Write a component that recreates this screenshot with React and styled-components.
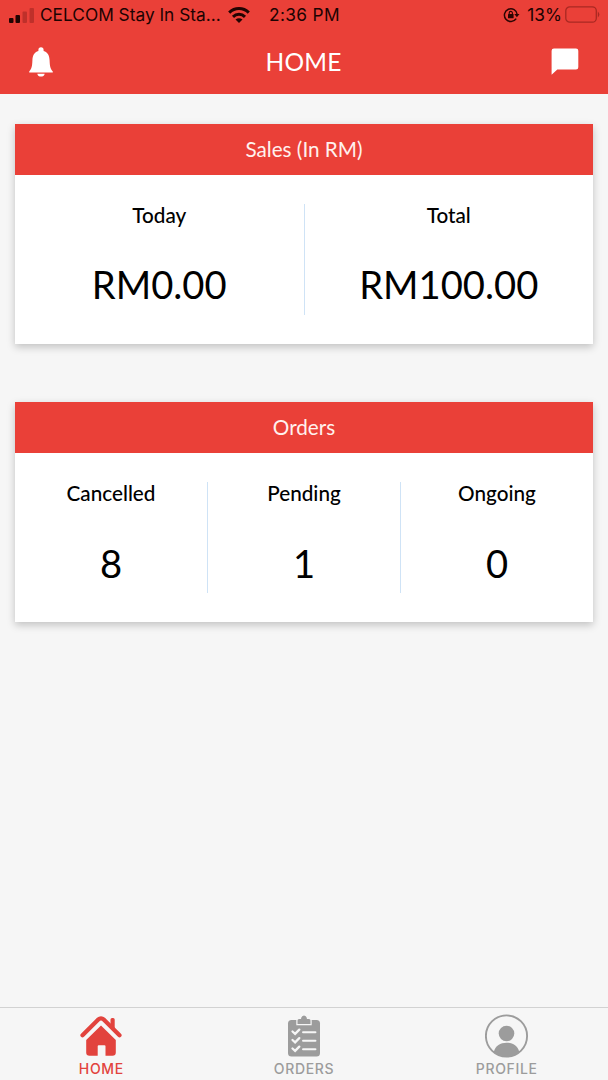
import React from 'react';
import styled, { createGlobalStyle } from 'styled-components';

const GlobalStyle = createGlobalStyle`
    * {
        box-sizing: border-box;
    }

    body {
        margin: 0;
        background: #f6f6f6;
    }
`;

const Container = styled.div`
    height: 100vh;
    display: flex;
    flex-direction: column;
    background: #f6f6f6;
    font-family: 'Lato', sans-serif;
    color: #000;
    overflow: hidden;
`;

const Header = styled.header`
    height: 94px;
    background: #ea4038;
`;

const StatusBar = styled.div`
    height: 29px;
    padding: 0 8px 0 9px;
    display: grid;
    grid-template-columns: 1fr auto 1fr;
    align-items: center;
    font-family: 'Inter', sans-serif;
    font-size: 17.3px;
    color: #1c0302;
    white-space: nowrap;
`;

const StatusGroup = styled.div`
    display: flex;
    align-items: center;
    justify-content: ${props => props.$end ? 'flex-end' : 'flex-start'};
`;

const StatusText = styled.span`
    letter-spacing: ${props => props.$spacing || '0'};
    margin-left: ${props => props.$left || '0'};
`;

const StatusIcon = styled.svg`
    flex: none;
    margin-left: ${props => props.$left || '0'};
`;

const TitleBar = styled.div`
    height: 65px;
    padding: 1px 29px 0 28px;
    display: flex;
    align-items: center;
    justify-content: space-between;
`;

const Title = styled.h1`
    margin: 0 0 0 2px;
    font-size: 24.5px;
    font-weight: 400;
    line-height: 30px;
    letter-spacing: 0.2px;
    color: #fff;
`;

const Content = styled.main`
    flex: 1;
    padding: 29.5px 15px 0;
    display: flex;
    flex-direction: column;
    gap: 59px;
`;

const Card = styled.section`
    height: 220px;
    display: flex;
    flex-direction: column;
    background: #fff;
    box-shadow: 0 3px 8px rgba(0, 0, 0, 0.22);

    & + & {
        margin-top: -0.4px;
    }
`;

const CardTitle = styled.h2`
    height: 51.3px;
    margin: 0;
    background: #ea4038;
    color: #fff1ee;
    font-size: 20.7px;
    font-weight: 400;
    line-height: 51px;
    text-align: center;
`;

const Stats = styled.div`
    flex: 1;
    display: flex;
    padding: 29px 0;
`;

const Stat = styled.div`
    flex: 1;
    text-align: center;

    &:not(:last-child) {
        border-right: 1px solid #cfe3f6;
    }
`;

const StatLabel = styled.div`
    font-size: 20.7px;
    font-weight: 500;
    line-height: 22px;
`;

const StatValue = styled.div`
    margin-top: 34.5px;
    font-size: 38.2px;
    line-height: 48px;
`;

const TabBar = styled.nav`
    height: 73px;
    display: flex;
    border-top: 1px solid #d2d2d2;
    background: #f6f6f6;
`;

const Tab = styled.div`
    flex: 1;
    display: flex;
    flex-direction: column;
    align-items: center;
    padding-top: 5px;
    color: ${props => props.$active ? '#e2433d' : '#9c9c9c'};
`;

const TabIcon = styled.div`
    height: 45px;
    display: flex;
    align-items: center;
`;

const TabLabel = styled.span`
    margin-top: 2px;
    font-family: 'Inter', sans-serif;
    font-size: 14px;
    font-weight: 500;
    line-height: 18px;
    letter-spacing: 0.65px;
`;

const SignalIcon = () => (
  <StatusIcon width="25" height="16" viewBox="0 0 25 16">
    <rect x="0" y="11" width="4.5" height="5" rx="1" fill="#210402" />
    <rect x="6.5" y="8" width="4.5" height="8" rx="1" fill="#210402" />
    <rect x="13.5" y="4.5" width="4.5" height="11.5" rx="1" fill="#bf302a" />
    <rect x="20.5" y="1" width="4.5" height="15" rx="1" fill="#bf302a" />
  </StatusIcon>
);

const WifiIcon = () => (
  <StatusIcon $left="7px" width="22" height="16" viewBox="0 0 22 16" fill="none" stroke="#210402" strokeWidth="3">
    <path d="M1.2 5.6C6.8.2 15.2.2 20.8 5.6" />
    <path d="M5 9.8c3.4-3.3 8.6-3.3 12 0" />
    <path d="M11 15.9 7.5 12.6q3.5-2.8 7 0z" fill="#210402" stroke="none" />
  </StatusIcon>
);

const RotationLockIcon = () => (
  <StatusIcon width="17" height="16" viewBox="0 0 17 16" fill="none" stroke="#2a0503" strokeWidth="1.5">
    <path d="M13.2 11.6A6.4 6.4 0 1 1 14.2 7.5" />
    <path d="M11.3 7h5.2l-2.6 3.2z" fill="#2a0503" stroke="none" />
    <rect x="5" y="7" width="5.6" height="4.3" rx=".6" fill="#2a0503" stroke="none" />
    <path d="M6.2 7.2V6a1.6 1.6 0 0 1 3.2 0v1.2" strokeWidth="1.1" />
  </StatusIcon>
);

const BatteryIcon = () => (
  <StatusIcon $left="3px" width="35" height="17" viewBox="0 0 35 17">
    <rect x=".8" y=".8" width="30.5" height="15.4" rx="4" fill="none" stroke="#a92822" strokeWidth="1.3" />
    <path d="M32.8 5.5q3.2 3 0 6z" fill="#a92822" />
  </StatusIcon>
);

const BellIcon = () => (
  <svg width="26" height="30" viewBox="0 0 26 30" fill="#fff">
    <path d="M13 .3c1.7 0 2.6 1 2.6 2.8v.8c4.1 1.2 5.8 4.4 6 9.5.2 6 .9 8.4 3.2 11.1v1H1.2v-1c2.3-2.7 3-5.1 3.2-11.1.2-5.1 1.9-8.3 6-9.5v-.8C10.4 1.300 11.3.3 13 .3z" />
    <path d="M9.3 26.7h7.4c-.5 3.8-6.9 3.8-7.4 0z" />
  </svg>
);

const ChatIcon = () => (
  <svg width="28" height="28" viewBox="0 0 28 28" fill="#fff">
    <path d="M3 .5h22q2.3 0 2.3 2.3v16.5q0 2.2-2.3 2.2H6.300L.6 26.800V2.800Q.6.5 3 .5z" />
  </svg>
);

const HomeIcon = () => (
  <svg width="42" height="42" viewBox="0 0 42 42" fill="currentColor">
    <path d="M30.5 4.5q0-1.5 1.6-1.5h1q1.600 0 1.600 1.500v11.500l-4.200-3.800z" />
    <path d="M2.500 20.200 17.800 4.900q3.200-3 6.400 0l15.300 15.300" fill="none" stroke="currentColor" strokeWidth="4.2" strokeLinecap="round" strokeLinejoin="round" />
    <path d="M21 10.500 35.800 25v12.500q0 3.300-3.300 3.300h-7V31.300q0-1-1-1h-5.800q-1 0-1 1v9.500H9.500q-3.300 0-3.300-3.300V25z" />
  </svg>
);

const OrdersIcon = () => (
  <svg width="34" height="42" viewBox="0 0 34 42">
    <rect x="1" y="5" width="32" height="36.5" rx="3.5" fill="#9c9c9c" />
    <path d="M10.500 9V5.500q0-1.500 1.500-1.500h2q.4-3.500 3-3.500t3 3.500h2q1.500 0 1.500 1.500V9z" fill="#9c9c9c" stroke="#f6f6f6" strokeWidth="2.4" />
    <path d="M10.500 9V5.500q0-1.500 1.500-1.500h2q.4-3.500 3-3.500t3 3.500h2q1.500 0 1.500 1.500V9z" fill="#9c9c9c" />
    <path d="m5.500 16.500 2.600 2.300 4.200-4.200M5.500 25l2.600 2.300 4.200-4.200M5.500 33.500l2.600 2.300 4.200-4.200" fill="none" stroke="#f6f6f6" strokeWidth="2.3" strokeLinecap="round" />
    <path d="M16 17.200H28.500M16 25.700H28.500M16 34.200H28.500" stroke="#f6f6f6" strokeWidth="1.9" strokeLinecap="round" />
  </svg>
);

const ProfileIcon = () => (
  <svg width="44" height="44" viewBox="0 0 44 44" fill="#9c9c9c">
    <circle cx="21.5" cy="22" r="20.6" fill="none" stroke="#9c9c9c" strokeWidth="1.9" />
    <circle cx="21.5" cy="19.5" r="7.8" />
    <path d="M8.700 38C10.500 31.500 15.300 28.800 21.500 28.800S32.500 31.500 34.300 38q-5.500 4.500-12.800 4.500T8.700 38z" />
  </svg>
);

const sales = [
  { label: 'Today', value: 'RM0.00' },
  { label: 'Total', value: 'RM100.00' },
];

const orders = [
  { label: 'Cancelled', value: '8' },
  { label: 'Pending', value: '1' },
  { label: 'Ongoing', value: '0' },
];

const StatCard = ({ title, items }) => (
  <Card>
    <CardTitle>{title}</CardTitle>
    <Stats>
      {items.map(item => (
        <Stat key={item.label}>
          <StatLabel>{item.label}</StatLabel>
          <StatValue>{item.value}</StatValue>
        </Stat>
      ))}
    </Stats>
  </Card>
);

const App = () => {
  return (
    <Container>
      <GlobalStyle />
      <Header>
        <StatusBar>
          <StatusGroup>
            <SignalIcon />
            <StatusText $left="6px">CELCOM Stay In Sta...</StatusText>
            <WifiIcon />
          </StatusGroup>
          <StatusText $spacing="0.35px">2:36 PM</StatusText>
          <StatusGroup $end>
            <RotationLockIcon />
            <StatusText $left="7px">13%</StatusText>
            <BatteryIcon />
          </StatusGroup>
        </StatusBar>
        <TitleBar>
          <BellIcon />
          <Title>HOME</Title>
          <ChatIcon />
        </TitleBar>
      </Header>
      <Content>
        <StatCard title="Sales (In RM)" items={sales} />
        <StatCard title="Orders" items={orders} />
      </Content>
      <TabBar>
        <Tab $active>
          <TabIcon><HomeIcon /></TabIcon>
          <TabLabel>HOME</TabLabel>
        </Tab>
        <Tab>
          <TabIcon><OrdersIcon /></TabIcon>
          <TabLabel>ORDERS</TabLabel>
        </Tab>
        <Tab>
          <TabIcon><ProfileIcon /></TabIcon>
          <TabLabel>PROFILE</TabLabel>
        </Tab>
      </TabBar>
    </Container>
  );
};

export default App;
